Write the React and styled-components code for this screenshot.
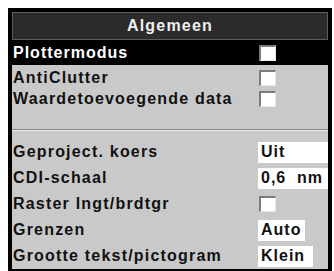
import React from 'react';
import styled, { createGlobalStyle } from 'styled-components'

const Global = createGlobalStyle`
body{
    margin:0;
    background:#ffffff;
}
`

const Frame = styled.div`
margin:8px 0 0 8px;
width:324px;
box-sizing:border-box;
background:#000;
border:4px solid #000;
border-bottom:2px solid #000;
font-family:"Liberation Sans", Arial, sans-serif;
font-weight:bold;
font-size:16px;
letter-spacing:1.2px;
`
const Header = styled.div`
height:28px;
box-sizing:border-box;
background:#2b2b2b;
border:1px solid #5e5e5e;
color:#f0f0f0;
display:flex;
align-items:center;
justify-content:center;
`
const PlotRow = styled.div`
height:25px;
display:flex;
align-items:center;
color:#fff;
letter-spacing:1px;
padding-left:1px;
`
const Panel = styled.div`
background:#c9c9c9;
padding-top:2px;
color:#111;
`
const Row = styled.div`
height:${p => p.h}px;
display:flex;
align-items:center;
padding-left:1px;
`
const Label = styled.span`
width:245px;
flex-shrink:0;
white-space:nowrap;
`
const Box = styled.span`
display:inline-block;
width:17px;
height:16px;
box-sizing:border-box;
background:#fff;
border-top:2px solid #7c7c7c;
border-left:2px solid #7c7c7c;
border-right:1px solid #e8e8e8;
border-bottom:1px solid #e8e8e8;
margin-left:1px;
`
const Value = styled.span`
display:flex;
justify-content:space-between;
align-items:center;
width:${p => p.w}px;
height:21px;
box-sizing:border-box;
background:#fff;
padding:0 5px 0 3px;
letter-spacing:1px;
`
const Separator = styled.div`
margin-top:20px;
height:1px;
background:#858585;
border-bottom:1px solid #ececec;
margin-bottom:8px;
`

export default function App() {
    return (
        <>
            <Global />
            <Frame>
                <Header>Algemeen</Header>
                <PlotRow>
                    <Label>Plottermodus</Label>
                    <Box />
                </PlotRow>
                <Panel>
                    <Row h={21}><Label>AntiClutter</Label><Box /></Row>
                    <Row h={21}><Label>Waardetoevoegende data</Label><Box /></Row>
                    <Separator />
                    <Row h={26}><Label>Geproject. koers</Label><Value w={70}>Uit</Value></Row>
                    <Row h={26}><Label>CDI-schaal</Label><Value w={70}><span>0,6</span><span>nm</span></Value></Row>
                    <Row h={26}><Label>Raster lngt/brdtgr</Label><Box /></Row>
                    <Row h={26}><Label>Grenzen</Label><Value w={47}>Auto</Value></Row>
                    <Row h={26}><Label>Grootte tekst/pictogram</Label><Value w={55}>Klein</Value></Row>
                </Panel>
            </Frame>
        </>
    );
}
